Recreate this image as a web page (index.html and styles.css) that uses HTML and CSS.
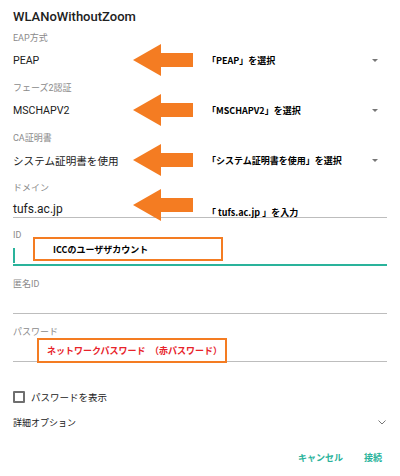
FILE: index.html
```html
<!DOCTYPE html>
<html lang="ja">
<head>
  <meta charset="UTF-8" />
  <meta name="viewport" content="width=device-width, initial-scale=1.0"/>
  <title>WLANoWithoutZoom</title>
  <link rel="stylesheet" href="styles.css">
</head>
<body>
  <div class="dialog">
    <h1 class="title">WLANoWithoutZoom</h1>

    <div class="field">
      <div class="label">EAP方式</div>
      <div class="select">
        <span class="value">PEAP</span>
        <span class="caret"></span>
        <div class="note">
          <svg class="arrow" viewBox="0 0 60 32"><polygon points="0,16 28,0 28,9 60,9 60,23 28,23 28,32"/></svg>
          <span>「PEAP」を選択</span>
        </div>
      </div>
    </div>

    <div class="field">
      <div class="label">フェーズ2認証</div>
      <div class="select">
        <span class="value">MSCHAPV2</span>
        <span class="caret"></span>
        <div class="note">
          <svg class="arrow" viewBox="0 0 60 32"><polygon points="0,16 28,0 28,9 60,9 60,23 28,23 28,32"/></svg>
          <span>「MSCHAPV2」を選択</span>
        </div>
      </div>
    </div>

    <div class="field">
      <div class="label">CA証明書</div>
      <div class="select">
        <span class="value">システム証明書を使用</span>
        <span class="caret"></span>
        <div class="note">
          <svg class="arrow" viewBox="0 0 60 32"><polygon points="0,16 28,0 28,9 60,9 60,23 28,23 28,32"/></svg>
          <span>「システム証明書を使用」を選択</span>
        </div>
      </div>
    </div>

    <div class="field">
      <div class="label">ドメイン</div>
      <div class="input">
        <span class="value">tufs.ac.jp</span>
        <div class="note note-low">
          <svg class="arrow" viewBox="0 0 60 32"><polygon points="0,16 28,0 28,9 60,9 60,23 28,23 28,32"/></svg>
          <span>「 tufs.ac.jp 」を入力</span>
        </div>
      </div>
    </div>

    <div class="text-field first">
      <div class="label">ID</div>
      <div class="input focused">
        <span class="cursor"></span>
        <div class="callout callout-id">ICCのユーザザカウント</div>
      </div>
    </div>

    <div class="text-field">
      <div class="label">匿名ID</div>
      <div class="input"></div>
    </div>

    <div class="text-field">
      <div class="label">パスワード</div>
      <div class="input">
        <div class="callout callout-pw">ネットワークパスワード　（赤パスワード）</div>
      </div>
    </div>

    <label class="check-row">
      <span class="checkbox"></span>
      <span>パスワードを表示</span>
    </label>

    <div class="advanced">
      <span>詳細オプション</span>
      <svg class="chevron" viewBox="0 0 8 5"><polyline points="0.5,0.5 4,4 7.5,0.5"/></svg>
    </div>

    <div class="actions">
      <button class="btn">キャンセル</button>
      <button class="btn">接続</button>
    </div>
  </div>
</body>
</html>
```

FILE: styles.css
```css
:root {
  --text: #212121;
  --muted: #8a8a8a;
  --line: #bdbdbd;
  --accent: #2ab39b;
  --orange: #f47c22;
  --red: #e8232a;
}

body, html {
  margin: 0;
  padding: 0;
  background: white;
  font-family: Roboto, "Noto Sans CJK JP", sans-serif;
  color: var(--text);
}

.dialog {
  width: 400px;
  height: 476px;
  padding: 0 13px;
  box-sizing: border-box;
  overflow: hidden;
}

.title {
  margin: 0;
  padding-top: 7px;
  font-size: 13px;
  line-height: 20px;
  font-weight: 500;
  margin-bottom: 4px;
}

.label {
  font-size: 9px;
  line-height: 14px;
  color: var(--muted);
}

.field {
  margin-bottom: 8px;
}

.field .label {
  margin-bottom: 2px;
}

.select {
  position: relative;
  height: 26px;
  display: flex;
  align-items: center;
  justify-content: space-between;
}

.value {
  font-size: 10.6px;
}

.caret {
  width: 0;
  height: 0;
  margin-right: 9px;
  border-left: 3px solid transparent;
  border-right: 3px solid transparent;
  border-top: 3px solid #777;
}

.input {
  position: relative;
  height: 20px;
  border-bottom: 1px solid var(--line);
  display: flex;
  align-items: center;
}

.field .input {
  height: 16px;
  padding-top: 4px;
  margin-bottom: -8px;
}

.field .input .value {
  font-size: 12px;
}

.input.focused {
  border-bottom: 2px solid var(--accent);
}

.cursor {
  width: 2px;
  height: 15px;
  margin-top: 3px;
  background: var(--accent);
}

.note {
  position: absolute;
  left: 120px;
  top: 50%;
  transform: translateY(-50%);
  display: flex;
  align-items: center;
  gap: 14px;
  font-family: "Noto Sans CJK JP", sans-serif;
  font-size: 9px;
  font-weight: bold;
  color: black;
  white-space: nowrap;
}

.note-low {
  top: 8px;
}

.note-low span {
  margin-top: 14px;
}

.arrow {
  width: 60px;
  height: 32px;
  fill: var(--orange);
}

.text-field {
  padding-top: 11px;
}

.text-field.first {
  padding-top: 10px;
}

.text-field .label {
  margin-bottom: 2px;
}

.callout {
  position: absolute;
  height: 20px;
  width: 186px;
  border: 2px solid var(--orange);
  display: flex;
  align-items: center;
  font-family: "Noto Sans CJK JP", sans-serif;
  font-size: 9px;
  font-weight: bold;
  white-space: nowrap;
}

.callout-id {
  left: 20px;
  top: -7px;
  padding-left: 18px;
  width: 168px;
  color: black;
}

.callout-pw {
  left: 24px;
  top: -3px;
  height: 21px;
  padding-left: 8px;
  width: 178px;
  color: var(--red);
}

.check-row {
  margin-top: 27px;
  height: 16px;
  display: flex;
  align-items: center;
  gap: 6px;
  font-size: 9.5px;
}

.checkbox {
  width: 8px;
  height: 8px;
  border: 2px solid #6f6f6f;
  border-radius: 1px;
}

.advanced {
  margin-top: 9px;
  height: 16px;
  display: flex;
  align-items: center;
  justify-content: space-between;
  font-size: 9px;
}

.chevron {
  width: 8px;
  height: 5px;
  margin-right: 1px;
  fill: none;
  stroke: #777;
  stroke-width: 1;
}

.actions {
  margin-top: 20px;
  display: flex;
  justify-content: flex-end;
  gap: 21px;
  padding-right: 5px;
}

.btn {
  border: none;
  background: transparent;
  padding: 0;
  font-family: "Noto Sans CJK JP", sans-serif;
  font-size: 9px;
  font-weight: bold;
  line-height: 16px;
  color: var(--accent);
  cursor: pointer;
}
```
